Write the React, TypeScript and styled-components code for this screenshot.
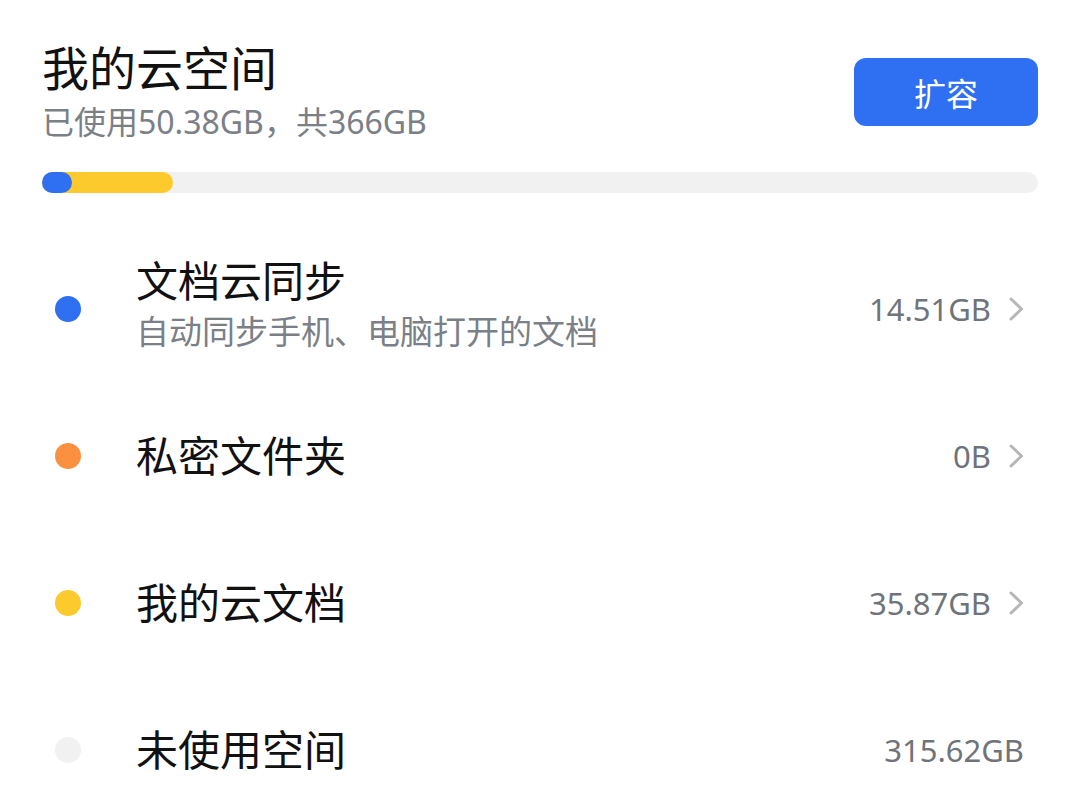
import React from 'react';
import styled, { createGlobalStyle } from 'styled-components';

const GlobalStyle = createGlobalStyle`
  html, body {
    margin: 0;
    padding: 0;
    background: #fff;
  }
  body {
    font-family: "Noto Sans", "Noto Sans CJK SC", sans-serif;
    -webkit-font-smoothing: antialiased;
  }
`;

type Item = {
  name: string;
  desc?: string;
  size: string;
  color: string;
  link: boolean;
};

const items: Item[] = [
  { name: '文档云同步', desc: '自动同步手机、电脑打开的文档', size: '14.51GB', color: '#2f6ff2', link: true },
  { name: '私密文件夹', size: '0B', color: '#fb9140', link: true },
  { name: '我的云文档', size: '35.87GB', color: '#fdca2e', link: true },
  { name: '未使用空间', size: '315.62GB', color: '#f1f1f1', link: false },
];

const Chevron = () => (
  <ChevronIcon viewBox="0 0 16 24" width="16" height="24">
    <polyline points="3,2 13.5,12 3,22" fill="none" stroke="#b6b6b6" strokeWidth="3" strokeLinecap="round" strokeLinejoin="round" />
  </ChevronIcon>
);

const App: React.FC = () => {
  const usedPct = 13.15;
  const syncPctOfUsed = 23;

  return (
    <>
      <GlobalStyle />
      <Page>
        <Header>
          <HeaderText>
            <Title>我的云空间</Title>
            <Usage>已使用50.38GB，共366GB</Usage>
          </HeaderText>
          <ExpandButton>扩容</ExpandButton>
        </Header>

        <Track>
          <UsedBar style={{ width: `${usedPct}%` }}>
            <SyncBar style={{ width: `${syncPctOfUsed}%` }} />
          </UsedBar>
        </Track>

        <List>
          {items.map((item) => (
            <Row key={item.name}>
              <Dot $color={item.color} />
              <RowText $hasDesc={!!item.desc}>
                <RowTitle>{item.name}</RowTitle>
                {item.desc && <RowDesc>{item.desc}</RowDesc>}
              </RowText>
              <Size>{item.size}</Size>
              {item.link && <Chevron />}
            </Row>
          ))}
        </List>
      </Page>
    </>
  );
};

export default App;

const Page = styled.div`
  padding: 40px 42px 0;
  box-sizing: border-box;
  width: 1080px;
`;

const Header = styled.div`
  display: flex;
  justify-content: space-between;
  align-items: center;
`;

const HeaderText = styled.div`
  display: flex;
  flex-direction: column;
`;

const Title = styled.div`
  font-size: 47px;
  line-height: 56px;
  color: #111;
`;

const Usage = styled.div`
  margin-top: 6px;
  font-size: 32px;
  line-height: 40px;
  color: #7b7f86;
`;

const ExpandButton = styled.button`
  width: 184px;
  height: 68px;
  border: none;
  border-radius: 12px;
  background: #2f6ff2;
  color: #fff;
  font-family: "Noto Sans CJK SC", sans-serif;
  font-size: 32px;
  margin-top: 2px;
  padding: 0;
`;

const Track = styled.div`
  margin-top: 30px;
  height: 21px;
  border-radius: 11px;
  background: #f1f1f1;
  display: flex;
`;

const UsedBar = styled.div`
  height: 100%;
  border-radius: 11px;
  background: #fdca2e;
  display: flex;
`;

const SyncBar = styled.div`
  height: 100%;
  border-radius: 11px;
  background: #2f6ff2;
`;

const List = styled.div`
  margin-top: 42px;
  display: flex;
  flex-direction: column;
`;

const Row = styled.div`
  height: 147px;
  display: flex;
  align-items: center;
  padding: 0 14px 0 13px;
`;

const Dot = styled.span<{ $color: string }>`
  width: 26px;
  height: 26px;
  border-radius: 50%;
  background: ${(p) => p.$color};
  flex-shrink: 0;
`;

const RowText = styled.div<{ $hasDesc: boolean }>`
  margin-left: 55px;
  margin-bottom: ${(p) => (p.$hasDesc ? '8px' : '0')};
  display: flex;
  flex-direction: column;
  gap: 4px;
`;

const RowTitle = styled.div`
  font-size: 42px;
  line-height: 50px;
  color: #111;
`;

const RowDesc = styled.div`
  font-size: 33px;
  line-height: 44px;
  color: #7b7f86;
`;

const Size = styled.div`
  margin-left: auto;
  font-size: 31px;
  line-height: 40px;
  color: #6f737a;
`;

const ChevronIcon = styled.svg`
  margin-left: 17px;
  flex-shrink: 0;
`;
